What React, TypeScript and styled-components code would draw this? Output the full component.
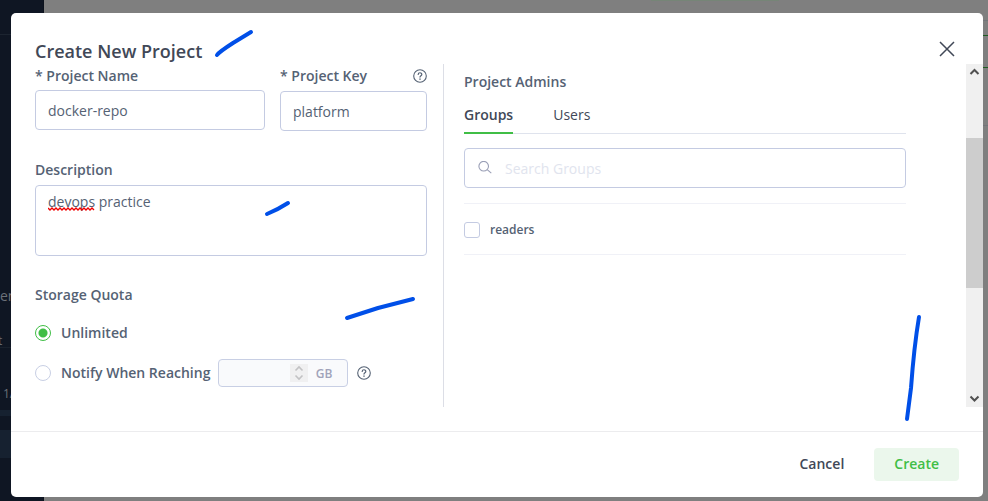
import React, { useState } from "react";
import styled, { createGlobalStyle, css } from "styled-components";

const GlobalStyle = createGlobalStyle`
  *, *::before, *::after { box-sizing: border-box; }
  body { margin: 0; font-family: "Open Sans", "Noto Sans", sans-serif; font-size: 14px; line-height: 20px; color: #556274; }
  button, input, textarea { font: inherit; color: inherit; margin: 0; }
`;

const Page = styled.div`
  position: relative;
  display: flex;
  height: 100vh;
  overflow: hidden;
  background: #7f7f7f;
`;

const Sidebar = styled.aside`
  display: flex;
  flex-direction: column;
  width: 44px;
  padding-top: 34px;
  background: #0f1623;
  color: #6b7078;
  border-right: 1px solid #0c121d;
`;

const SidebarHead = styled.div`
  height: 252px;
  border-top: 1px solid #1c2430;
`;

const SidebarText = styled.div<{ $indent?: boolean }>`
  height: 20px;
  padding-left: ${(p) => (p.$indent ? 3 : 0)}px;
  white-space: nowrap;
  font-size: ${(p) => (p.$indent ? 12 : 14)}px;
`;

const SidebarCaption = styled.div`
  height: 16px;
  margin-top: 25px;
  overflow: hidden;
  font-size: 12px;
  text-indent: -2px;
`;

const SidebarRule = styled.div`
  height: 37px;
  border-top: 1px solid #19212d;
`;

const SidebarBar = styled.div<{ $tall?: boolean }>`
  height: ${(p) => (p.$tall ? 28 : 6)}px;
  margin-top: ${(p) => (p.$tall ? 14 : 6)}px;
  background: #162130;
`;

const Backdrop = styled.main`
  display: flex;
  flex: 1;
  flex-direction: column;
  align-items: flex-end;
`;

const BackLine = styled.div<{ $gap: number; $green?: boolean }>`
  width: 12px;
  height: 1px;
  margin-top: ${(p) => p.$gap}px;
  background: ${(p) => (p.$green ? "#215c23" : "#737579")};
`;

const BackEdge = styled.div`
  align-self: center;
  width: 128px;
  height: 1px;
  margin-left: 398px;
  background: #768577;
`;

const Overlay = styled.div`
  position: absolute;
  inset: 0;
  display: flex;
  padding: 13px 5px 4px 11px;
`;

const Dialog = styled.form`
  display: flex;
  flex: 1;
  flex-direction: column;
  min-width: 0;
  overflow: hidden;
  border-radius: 5px;
  background: #fff;
`;

const Header = styled.header`
  display: flex;
  justify-content: space-between;
  align-items: flex-end;
  height: 51px;
  padding: 0 28px 0 24px;
`;

const Title = styled.h1`
  margin: 0;
  font-size: 18px;
  font-weight: 600;
  line-height: 26px;
  color: #414857;
`;

const CloseButton = styled.button`
  display: flex;
  padding: 0;
  margin-bottom: 7px;
  border: 0;
  background: none;
  color: #414857;
`;

const Body = styled.div`
  display: grid;
  grid-template-columns: 409fr 522fr 17px;
  flex: 1;
  min-height: 0;
  margin-bottom: 24px;
  padding-left: 24px;
`;

const Details = styled.section`
  display: flex;
  flex-direction: column;
  min-width: 0;
  padding: 2px 16px 0 0;
  border-right: 1px solid #dcdee6;
`;

const FieldRow = styled.div`
  display: grid;
  grid-template-columns: 230fr 147fr;
  gap: 15px;
  margin-bottom: 29px;
`;

const Field = styled.div<{ $gap?: number }>`
  display: flex;
  flex-direction: column;
  gap: ${(p) => p.$gap ?? 4}px;
  min-width: 0;
`;

const LabelRow = styled.div`
  display: flex;
  justify-content: space-between;
  align-items: center;
`;

const labelText = css`
  font-size: 14px;
  font-weight: 600;
  line-height: 20px;
  color: #556274;
`;

const Label = styled.label`
  ${labelText}
`;

const Heading = styled.h2`
  ${labelText}
  margin: 0;
`;

const HelpButton = styled.button`
  display: flex;
  padding: 0;
  border: 0;
  background: none;
  color: #556274;
`;

const control = css`
  width: 100%;
  border: 1px solid #c4cbe2;
  border-radius: 4px;
  background: #fff;
  outline: none;
`;

const TextInput = styled.input`
  ${control}
  height: 40px;
  padding: 0 12px;
`;

const AreaWrap = styled.div`
  position: relative;
  display: flex;
`;

const TextArea = styled.textarea`
  ${control}
  height: 71px;
  padding: 6px 12px;
  resize: none;
`;

const Squiggle = styled.svg`
  position: absolute;
  top: 22px;
  left: 13px;
`;

const Quota = styled.fieldset`
  display: flex;
  flex-direction: column;
  min-width: 0;
  margin: 29px 0 0;
  padding: 0;
  border: 0;
`;

const Legend = styled.legend`
  ${labelText}
  padding: 0;
  margin-bottom: 18px;
`;

const Option = styled.div`
  display: flex;
  align-items: center;
  height: 20px;
  margin-bottom: 20px;
`;

const OptionLabel = styled(Label)`
  padding-left: 10px;
  white-space: nowrap;
`;

const Radio = styled.input`
  appearance: none;
  flex: none;
  width: 16px;
  height: 16px;
  border: 1px solid #c8cfe4;
  border-radius: 50%;
  background: #fff;
  &:checked {
    border-color: #40be46;
    background: radial-gradient(circle, #40be46 4px, #fff 5px);
  }
`;

const Amount = styled.div`
  display: flex;
  align-items: center;
  width: 130px;
  height: 28px;
  margin: 0 9px 0 8px;
  padding-right: 15px;
  border: 1px solid #c8cfe4;
  border-radius: 4px;
  background: #f9fafc;
  font-size: 12px;
  font-weight: 600;
  color: #a0a3ba;
`;

const AmountInput = styled.input`
  flex: 1;
  width: 0;
  min-width: 0;
  height: 26px;
  border: 0;
  background: none;
  appearance: textfield;
  outline: none;
  &::-webkit-inner-spin-button { display: none; }
`;

const Stepper = styled.span`
  display: flex;
  margin-right: 8px;
  background: #f0f0f1;
`;

const Unit = styled.span`
  padding-top: 2px;
`;

const Admins = styled.section`
  min-width: 0;
  padding: 8px 60px 0 20px;
`;

const Tabs = styled.div`
  display: flex;
  gap: 40px;
  height: 29px;
  margin: 13px 0 14px;
  border-bottom: 1px solid #dfe3ed;
`;

const Tab = styled.button<{ $active: boolean }>`
  height: 29px;
  padding: 0 0 7px;
  border: 0;
  border-bottom: 2px solid ${(p) => (p.$active ? "#40be46" : "transparent")};
  background: none;
  font-weight: ${(p) => (p.$active ? 600 : 400)};
  color: #414857;
`;

const SearchBox = styled.label`
  ${control}
  display: flex;
  align-items: center;
  gap: 13px;
  height: 40px;
  margin-bottom: 15px;
  padding: 0 13px;
  color: #9a9fb6;
`;

const SearchInput = styled.input`
  flex: 1;
  min-width: 0;
  padding: 2px 0 0;
  border: 0;
  background: none;
  outline: none;
  color: #556274;
  &::placeholder { color: #e1e4ee; opacity: 1; }
`;

const GroupList = styled.ul`
  margin: 0;
  padding: 0;
  list-style: none;
  border-top: 1px solid #f0f1f7;
`;

const GroupItem = styled.li`
  display: flex;
  align-items: center;
  height: 51px;
  padding-top: 2px;
  border-bottom: 1px solid #f0f1f7;
`;

const GroupLabel = styled.label`
  display: flex;
  align-items: center;
  gap: 10px;
  font-size: 12px;
  font-weight: 600;
`;

const Checkbox = styled.input`
  appearance: none;
  width: 16px;
  height: 16px;
  border: 1px solid #c4cbe2;
  border-radius: 3px;
  background: #fff;
  &:checked { background: #40be46; }
`;

const ScrollTrack = styled.div`
  display: flex;
  flex-direction: column;
  align-items: center;
  background: #f0f0f0;
`;

const ScrollSpace = styled.div<{ $grow: number; $thumb?: boolean }>`
  flex: ${(p) => p.$grow};
  align-self: stretch;
  background: ${(p) => (p.$thumb ? "#cdcdcd" : "transparent")};
`;

const Footer = styled.footer`
  display: flex;
  justify-content: flex-end;
  align-items: center;
  height: 66px;
  padding: 0 24px;
  gap: 10px;
  border-top: 1px solid #ececee;
`;

const ActionButton = styled.button<{ $primary?: boolean }>`
  height: 33px;
  padding: 0 20px 2px;
  border: 0;
  border-radius: 4px;
  font-weight: 600;
  background: ${(p) => (p.$primary ? "#ebf7ec" : "transparent")};
  color: ${(p) => (p.$primary ? "#40be46" : "#414857")};
`;

const Marks = styled.svg`
  position: absolute;
  top: 0;
  left: 0;
  pointer-events: none;
`;

const HelpIcon = () => (
  <svg width="14" height="14" viewBox="0 0 14 14" fill="none" stroke="currentColor" strokeLinecap="round" aria-hidden="true">
    <circle cx="7" cy="7" r="6.3" strokeWidth="1.1" />
    <path d="M5.2 5.5C5.2 3.2 8.8 3.2 8.8 5.4C8.8 6.7 7 6.7 7 8.1" strokeWidth="1.2" />
    <path d="M7 10v.2" strokeWidth="1.4" />
  </svg>
);

const Chevron = ({ down = false }: { down?: boolean }) => (
  <svg width="17" height="17" viewBox="0 0 17 17" fill="none" stroke="#505050" strokeWidth="2" aria-hidden="true">
    <path d={down ? "M4.5 6.5L8.5 10.5L12.5 6.5" : "M4.5 10L8.5 6L12.5 10"} />
  </svg>
);

export default function App() {
  const [tab, setTab] = useState("Groups");
  const [quota, setQuota] = useState("unlimited");

  return (
    <>
      <GlobalStyle />
      <Page>
        <Sidebar>
          <SidebarHead />
          <SidebarText>en</SidebarText>
          <SidebarCaption>t</SidebarCaption>
          <SidebarRule />
          <SidebarText $indent>1/1</SidebarText>
          <SidebarBar />
          <SidebarBar $tall />
        </Sidebar>
        <Backdrop>
          <BackEdge />
          <BackLine $gap={19} />
          <BackLine $gap={14} $green />
          <BackLine $gap={31} $green />
          <BackLine $gap={57} />
        </Backdrop>
        <Overlay>
          <Dialog role="dialog" aria-labelledby="dialog-title" onSubmit={(e: React.FormEvent) => e.preventDefault()}>
            <Header>
              <Title id="dialog-title">Create New Project</Title>
              <CloseButton type="button" aria-label="Close">
                <svg width="16" height="16" viewBox="0 0 16 16" stroke="currentColor" strokeWidth="1.5" aria-hidden="true">
                  <path d="M1 1L15 15M15 1L1 15" />
                </svg>
              </CloseButton>
            </Header>
            <Body>
              <Details>
                <FieldRow>
                  <Field>
                    <Label htmlFor="name">* Project Name</Label>
                    <TextInput id="name" defaultValue="docker-repo" />
                  </Field>
                  <Field $gap={5}>
                    <LabelRow>
                      <Label htmlFor="key">* Project Key</Label>
                      <HelpButton type="button" aria-label="Project key help"><HelpIcon /></HelpButton>
                    </LabelRow>
                    <TextInput id="key" defaultValue="platform" />
                  </Field>
                </FieldRow>
                <Field $gap={5}>
                  <Label htmlFor="description">Description</Label>
                  <AreaWrap>
                    <TextArea id="description" defaultValue="devops practice" spellCheck={false} />
                    <Squiggle width="47" height="4" viewBox="0 0 47 4" fill="none" stroke="#f00000" strokeWidth="1.4" aria-hidden="true">
                      <path d="M0 1L2 3L4 1L6 3L8 1L10 3L12 1L14 3L16 1L18 3L20 1L22 3L24 1L26 3L28 1L30 3L32 1L34 3L36 1L38 3L40 1L42 3L44 1L46 3" />
                    </Squiggle>
                  </AreaWrap>
                </Field>
                <Quota>
                  <Legend>Storage Quota</Legend>
                  <Option>
                    <Radio type="radio" name="quota" id="unlimited" checked={quota === "unlimited"} onChange={() => setQuota("unlimited")} />
                    <OptionLabel htmlFor="unlimited">Unlimited</OptionLabel>
                  </Option>
                  <Option>
                    <Radio type="radio" name="quota" id="notify" checked={quota === "notify"} onChange={() => setQuota("notify")} />
                    <OptionLabel htmlFor="notify">Notify When Reaching</OptionLabel>
                    <Amount>
                      <AmountInput type="number" aria-label="Storage amount in GB" disabled={quota !== "notify"} />
                      <Stepper>
                        <svg width="18" height="18" viewBox="0 0 18 18" fill="none" stroke="#c2c2c4" strokeWidth="1.6" aria-hidden="true">
                          <path d="M5.5 6.5L9 3L12.5 6.5M5.5 11.5L9 15L12.5 11.5" />
                        </svg>
                      </Stepper>
                      <Unit>GB</Unit>
                    </Amount>
                    <HelpButton type="button" aria-label="Storage quota help"><HelpIcon /></HelpButton>
                  </Option>
                </Quota>
              </Details>
              <Admins>
                <Heading>Project Admins</Heading>
                <Tabs role="tablist">
                  {["Groups", "Users"].map((name) => (
                    <Tab key={name} type="button" role="tab" aria-selected={tab === name} $active={tab === name} onClick={() => setTab(name)}>
                      {name}
                    </Tab>
                  ))}
                </Tabs>
                <SearchBox>
                  <svg width="14" height="14" viewBox="0 0 14 14" fill="none" stroke="currentColor" strokeWidth="1.1" aria-hidden="true">
                    <circle cx="5.7" cy="5.2" r="4.8" />
                    <path d="M9.2 8.6L13.3 12.2" />
                  </svg>
                  <SearchInput type="text" placeholder="Search Groups" aria-label="Search Groups" />
                </SearchBox>
                <GroupList>
                  <GroupItem>
                    <GroupLabel>
                      <Checkbox type="checkbox" />
                      readers
                    </GroupLabel>
                  </GroupItem>
                </GroupList>
              </Admins>
              <ScrollTrack aria-hidden="true">
                <Chevron />
                <ScrollSpace $grow={57} />
                <ScrollSpace $grow={150} $thumb />
                <ScrollSpace $grow={102} />
                <Chevron down />
              </ScrollTrack>
            </Body>
            <Footer>
              <ActionButton type="button">Cancel</ActionButton>
              <ActionButton type="submit" $primary>Create</ActionButton>
            </Footer>
          </Dialog>
        </Overlay>
        <Marks width="988" height="501" viewBox="0 0 988 501" fill="none" stroke="#004fe8" strokeWidth="4" strokeLinecap="round" strokeLinejoin="round" aria-hidden="true">
          <path d="M217 55Q219 52 233 43L251 32" />
          <path d="M267 214Q277 210 288 203" />
          <path d="M347 318L378 308L413 299" />
          <path d="M919 317Q914 347 911 388L907 419" />
        </Marks>
      </Page>
    </>
  );
}
